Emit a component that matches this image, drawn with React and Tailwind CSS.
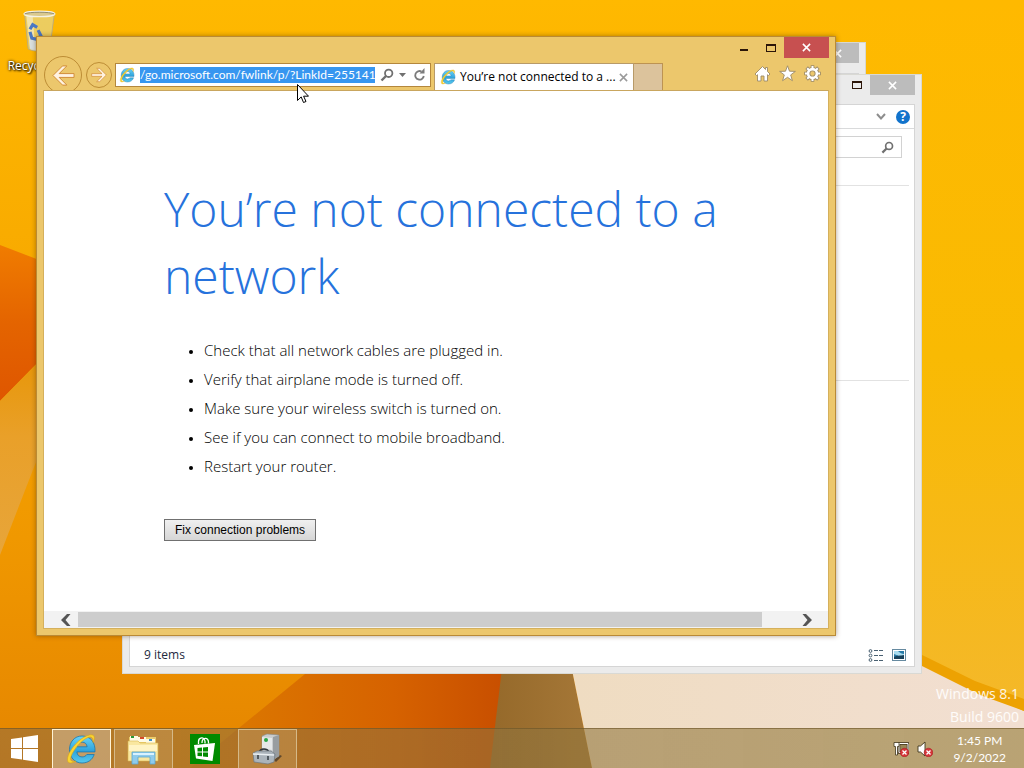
import React, { useId } from "react";

const tips = [
  "Check that all network cables are plugged in.",
  "Verify that airplane mode is turned off.",
  "Make sure your wireless switch is turned on.",
  "See if you can connect to mobile broadband.",
  "Restart your router.",
];

function Wallpaper() {
  return (
    <svg className="absolute inset-0 h-full w-full" viewBox="0 0 1024 768" preserveAspectRatio="none" aria-hidden="true">
      <defs>
        <linearGradient id="wpBase" x1="0" y1="0" x2="0" y2="1">
          <stop offset="0" stopColor="#ffb900" />
          <stop offset="0.35" stopColor="#f8aa00" />
          <stop offset="0.7" stopColor="#f09800" />
          <stop offset="1" stopColor="#e58500" />
        </linearGradient>
        <linearGradient id="wpRed" x1="0" y1="0" x2="0" y2="1">
          <stop offset="0" stopColor="#f07c00" />
          <stop offset="0.5" stopColor="#e46400" />
          <stop offset="1" stopColor="#df5600" />
        </linearGradient>
        <linearGradient id="wpTan" x1="0" y1="0" x2="0" y2="1">
          <stop offset="0" stopColor="#e79400" />
          <stop offset="0.45" stopColor="#e9a029" />
          <stop offset="1" stopColor="#e7a53a" />
        </linearGradient>
        <linearGradient id="wpDeep" x1="0" y1="0" x2="1" y2="0">
          <stop offset="0" stopColor="#dd7d00" />
          <stop offset="0.65" stopColor="#d66200" />
          <stop offset="1" stopColor="#c84f00" />
        </linearGradient>
        <linearGradient id="wpOlive" x1="0" y1="0" x2="1" y2="0">
          <stop offset="0" stopColor="#95692a" />
          <stop offset="1" stopColor="#a67838" />
        </linearGradient>
        <linearGradient id="wpSand" x1="0" y1="0" x2="1" y2="0">
          <stop offset="0" stopColor="#efdcc1" />
          <stop offset="1" stopColor="#f2dfd2" />
        </linearGradient>
        <linearGradient id="wpRight" x1="0" y1="0" x2="0" y2="1">
          <stop offset="0" stopColor="#ffb900" />
          <stop offset="0.5" stopColor="#f9ba03" />
          <stop offset="1" stopColor="#f4b82a" />
        </linearGradient>
      </defs>
      <rect width="1024" height="768" fill="url(#wpBase)" />
      <path d="M0 245 60 268V340L0 401Z" fill="url(#wpRed)" />
      <path d="M0 401 60 340V400L0 555Z" fill="url(#wpTan)" />
      <path d="M190 768 305 674H503L492 768Z" fill="url(#wpDeep)" />
      <path d="M503 660H570L592 768H490Z" fill="url(#wpOlive)" />
      <path d="M570 660H1024V768H592Z" fill="url(#wpSand)" />
      <path d="M820 0H1024V711L922 665H820Z" fill="url(#wpRight)" />
      <path d="M918 653 975 681 1024 699V711L980 695 918 664Z" fill="#eda202" />
    </svg>
  );
}

function IeLogo({ className }) {
  const id = useId();
  return (
    <svg className={className} viewBox="0 0 32 32" aria-hidden="true">
      <defs>
        <linearGradient id={id} x1="0" y1="0" x2="0" y2="1">
          <stop offset="0" stopColor="#69d3f7" />
          <stop offset="0.55" stopColor="#2fa3dc" />
          <stop offset="1" stopColor="#57c9ee" />
        </linearGradient>
      </defs>
      <path
        d="M17 3C9.500 3 4.500 9 4.500 16.500S9.500 30 17 30c6 0 10.500-3.300 12.200-8.500h-7.400c-1 1.600-2.600 2.400-4.700 2.400-3 0-5-1.900-5.200-5H30C30.600 9.500 25.500 3 17 3Zm-5 10.800c.5-2.900 2.400-4.600 5.200-4.600s4.600 1.700 4.900 4.600Z"
        fill={`url(#${id})`}
        stroke="#1b76ad"
        strokeWidth="0.8"
        fillRule="evenodd"
      />
      <path
        d="M28 9.500C30.500 4.500 29.500 1 24.500 2 17.500 3.300 8.500 11.500 4 20.500 1.500 26 2 30.500 6 30c1.800-.2 3.500-1 5-2-3 .9-5.600.5-5.400-2.600C6 20 15 8 22.500 4.700c3.700-1.700 5.900-.6 5.500 4.800Z"
        fill="#fbd531"
        stroke="#d9a514"
        strokeWidth="0.6"
      />
    </svg>
  );
}

function CloseGlyph({ className }) {
  return (
    <svg className={className} viewBox="0 0 10 10" fill="none" stroke="currentColor" strokeWidth="1.700" aria-hidden="true">
      <path d="M1 1 9 9M9 1 1 9" />
    </svg>
  );
}

function MaxGlyph() {
  return <span className="block h-2 w-[10px] border border-t-2 border-[#2b1508]" />;
}

function SearchGlyph({ className }) {
  return (
    <svg className={className} viewBox="0 0 14 14" fill="none" stroke="#707070" aria-hidden="true">
      <circle cx="8.700" cy="5.300" r="3.700" strokeWidth="1.800" />
      <path d="M6 8 1.500 12.500" strokeWidth="2.400" />
    </svg>
  );
}

function RecycleBin() {
  return (
    <a href="#recycle-bin" className="absolute left-0 top-2 flex w-[78px] flex-col items-center gap-1 text-xs leading-4 text-white [text-shadow:1px_1px_2px_#000,0_0_3px_#000]">
      <svg className="h-[46px] w-9" viewBox="0 0 40 46" aria-hidden="true">
        <path d="M4 4 8 43c5 3 19 3 24 0L37 4Z" fill="#e9d070" fillOpacity="0.850" stroke="#b9ab80" />
        <path d="M6 6 10 42c2 1 4 1 6 2L13 7Z" fill="#f7f1da" opacity="0.600" />
        <path d="M9 33h16l-1 11c-5 1-11 1-14-1Z" fill="#d3deec" opacity="0.800" />
        <ellipse cx="20.500" cy="4" rx="17" ry="3" fill="#dac98e" stroke="#f5f2e4" strokeWidth="1.500" />
        <path d="M4 4c5-2.500 28-2.500 33 0" fill="none" stroke="#8b8666" />
        <g fill="none" stroke="#4a78c4" strokeWidth="3.500">
          <path d="m10 21 3-5 5 3" />
          <path d="m10 24 2 7 5 1" />
          <path d="m19 22 3 6-4 4" />
        </g>
      </svg>
      Recycle Bin
    </a>
  );
}

function BackWindow() {
  return (
    <section aria-label="Background window" className="absolute left-[400px] top-[42px] flex h-[200px] w-[466px] flex-col border border-[#d8d8d0] bg-[#ebebeb] pr-[6px]">
      <div className="flex justify-end">
        <button aria-label="Close background window" className="flex h-5 w-[44px] items-center justify-center bg-[#bcbcbc] text-white">
          <CloseGlyph className="h-[9px] w-[9px]" />
        </button>
      </div>
      <div className="mt-[10px] flex-1 border border-[#d5d5d5] bg-white" />
    </section>
  );
}

function ExplorerWindow() {
  return (
    <section aria-label="This PC" className="absolute left-[122px] top-[74px] flex h-[600px] w-[800px] flex-col border border-[#d9d9d4] bg-[#ebebeb] px-[6px] pb-[6px]">
      <div className="flex h-[29px] items-start justify-end">
        <button aria-label="Maximize This PC" className="flex h-5 w-[27px] items-center justify-center">
          <MaxGlyph />
        </button>
        <button aria-label="Close This PC" className="flex h-5 w-[45px] items-center justify-center bg-[#bcbcbc] text-white">
          <CloseGlyph className="h-[9px] w-[9px]" />
        </button>
      </div>
      <div className="flex flex-1 flex-col border border-[#d5d5d5] bg-white">
        <div className="flex h-6 items-center justify-end gap-[10px] border-b border-[#d9dadb] pr-1">
          <button aria-label="Expand ribbon">
            <svg className="h-2 w-[10px]" viewBox="0 0 10 8" fill="none" stroke="#8d8d8d" strokeWidth="2" aria-hidden="true">
              <path d="m1 1 4 4.500L9 1" />
            </svg>
          </button>
          <button aria-label="Help" className="flex h-[14px] w-[14px] items-center justify-center rounded-full bg-[#1173cc] text-xs font-bold leading-none text-white">
            ?
          </button>
        </div>
        <div className="mt-[7px] flex h-[22px] w-[300px] items-center self-end border border-[#d2d2d2] mr-[12px] pr-[7px]">
          <input aria-label="Search This PC" className="min-w-0 flex-1 bg-transparent outline-none" />
          <SearchGlyph className="h-[13px] w-[13px]" />
        </div>
        <div className="mx-[5px] mt-[27px] h-[196px] border-y border-[#e2e2e2]" />
        <footer className="mt-auto flex h-[22px] items-center justify-between pl-[14px] pr-2 text-xs text-[#1e2a3e]">
          <span>9 items</span>
          <span className="flex items-center gap-2">
            <button aria-label="Details view">
              <svg className="h-[13px] w-4" viewBox="0 0 16 13" fill="none" stroke="#4a6172" aria-hidden="true">
                <circle cx="2.500" cy="2" r="1.400" />
                <circle cx="2.500" cy="6.500" r="1.400" />
                <circle cx="2.500" cy="11" r="1.400" />
                <path d="M6 1.500h4m1 0h4M6 6.500h4m1 0h4M6 11.500h4m1 0h4" />
              </svg>
            </button>
            <button aria-label="Large icons view">
              <svg className="h-[12px] w-[14px]" viewBox="0 0 14 12" aria-hidden="true">
                <rect x="0.500" y="0.500" width="13" height="11" fill="#fff" stroke="#668aa0" />
                <rect x="2" y="2" width="10" height="8" fill="#277aa8" />
                <path d="M2 2h4c2 2 4 3 6 3v2H7L2 5Z" fill="#a9dcef" />
                <path d="M2 8c3-2 6-1 10-2v4H2Z" fill="#17405a" />
              </svg>
            </button>
          </span>
        </footer>
      </div>
    </section>
  );
}

function NavArrow({ flip, className }) {
  return (
    <svg className={className} viewBox="0 0 24 24" aria-hidden="true">
      <path
        transform={flip ? "rotate(180 12 12)" : undefined}
        d="M1 12 11 2h4.500l-8 8H23v4H7.500l8 8H11Z"
        fill="#fff2e0"
        stroke="#d08a35"
        strokeWidth="1"
      />
    </svg>
  );
}

function BrowserWindow() {
  return (
    <section aria-label="Internet Explorer" className="absolute left-[36px] top-[36px] flex h-[600px] w-[800px] flex-col border border-[#b98a36] bg-[#ecc76c] px-[6px] pb-[6px] shadow-[0_0_5px_rgba(70,40,0,0.45)]">
      <header className="flex h-[53px] shrink-0 items-end justify-between overflow-hidden pl-px">
        <div className="flex items-end">
          <button aria-label="Back" className="-mb-1 mr-1 flex h-[38px] w-[38px] items-center justify-center rounded-full border border-[#bd8d35]">
            <NavArrow className="h-[23px] w-[23px]" />
          </button>
          <button aria-label="Forward" className="mb-[2px] flex h-[26px] w-[26px] items-center justify-center rounded-full border border-[#bd8d35]">
            <NavArrow flip className="h-4 w-4" />
          </button>
          <div className="mb-[3px] ml-[3px] flex h-6 w-[316px] items-center border border-[#b4873c] bg-white pl-[3px] pr-1">
            <IeLogo className="h-4 w-4 shrink-0" />
            <input
              aria-label="Address"
              readOnly
              value="/go.microsoft.com/fwlink/p/?LinkId=255141"
              className="ml-[5px] h-4 min-w-0 flex-1 bg-[#3796f0] font-['Lato',sans-serif] text-xs text-white outline-none"
            />
            <button aria-label="Search" className="ml-[5px]">
              <SearchGlyph className="h-[14px] w-[14px]" />
            </button>
            <button aria-label="Show address list" className="ml-[5px]">
              <svg className="h-1 w-[7px]" viewBox="0 0 7 4" fill="#707070" aria-hidden="true">
                <path d="M0 0h7L3.500 4Z" />
              </svg>
            </button>
            <button aria-label="Refresh" className="ml-[7px]">
              <svg className="h-[14px] w-[13px]" viewBox="0 0 13 14" aria-hidden="true">
                <path d="M8.500 3.500A4.300 4.300 0 1 0 10.800 8" fill="none" stroke="#7b7b7b" strokeWidth="1.800" />
                <path d="M6.500 5.500h5V0Z" fill="#7b7b7b" />
              </svg>
            </button>
          </div>
          <div className="ml-[3px] flex h-[27px] items-stretch">
            <div className="flex w-[200px] items-center border border-b-0 border-[#b89a68] bg-white pl-[5px] pr-[5px]">
              <IeLogo className="h-4 w-4 shrink-0" />
              <span className="ml-1 flex-1 whitespace-nowrap text-xs text-black">You’re not connected to a ...</span>
              <button aria-label="Close tab" className="text-[#9a9a9a]">
                <CloseGlyph className="h-[9px] w-[9px]" />
              </button>
            </div>
            <button aria-label="New tab" className="w-[29px] border border-b-0 border-l-0 border-[#bd9352] bg-[#dcc39c]" />
          </div>
        </div>
        <div className="flex h-full flex-col items-end justify-between">
          <div className="flex text-white">
            <button aria-label="Minimize" className="flex h-[21px] w-[27px] items-center justify-center pt-[5px]">
              <span className="h-[2px] w-2 bg-[#2b1508]" />
            </button>
            <button aria-label="Maximize" className="flex h-[21px] w-[27px] items-center justify-center">
              <MaxGlyph />
            </button>
            <button aria-label="Close" className="flex h-[21px] w-[45px] items-center justify-center bg-[#c75050]">
              <CloseGlyph className="h-[9px] w-[9px]" />
            </button>
          </div>
          <div className="mb-2 mr-2 flex items-center gap-2">
            <button aria-label="Home">
              <svg className="h-[17px] w-[17px]" viewBox="0 0 17 17" fill="#fff" stroke="#9c8a68" strokeWidth="0.900" aria-hidden="true">
                <path d="M8.500 1.500 1 9l1.500 1.500L3.500 9.700V16H7v-5h3v5h3.500V9.700l1 .8L16 9l-2.500-2.500V2.500h-2v2Z" />
              </svg>
            </button>
            <button aria-label="Favorites">
              <svg className="h-[17px] w-[17px]" viewBox="0 0 17 17" fill="#fff" stroke="#9c8a68" strokeWidth="0.900" aria-hidden="true">
                <path d="m8.500.8 2 5.400 5.900.2-4.700 3.500 1.700 5.800-4.900-3.400-4.900 3.400 1.700-5.800L.6 6.400l5.900-.2Z" />
              </svg>
            </button>
            <button aria-label="Tools">
              <svg className="h-[17px] w-[17px]" viewBox="-8.500 -8.500 17 17" aria-hidden="true">
                {["#9c8a68", "#ffffff"].map((color, layer) => (
                  <g key={color} stroke={color} fill="none">
                    <circle r="4.400" strokeWidth={layer ? 2.600 : 4.400} />
                    {[0, 45, 90, 135].map((a) => (
                      <g key={a} transform={`rotate(${a})`} strokeWidth={layer ? 2 : 3.600}>
                        <path d={layer ? "M0-7.500V-5M0 5v2.500" : "M0-8.300V-5M0 5v3.300"} />
                      </g>
                    ))}
                  </g>
                ))}
              </svg>
            </button>
          </div>
        </div>
      </header>
      <main className="flex min-h-0 flex-1 flex-col border border-[#d5b05c] border-t-[#c9a65e] bg-white">
        <div className="flex-1 pl-[120px] pr-[80px] pt-[84px]">
          <h1 className="text-[48px] font-light leading-[67px] text-[#2672dc]">You’re not connected to a network</h1>
          <ul className="mt-[27px] list-disc pl-10 text-[15px] font-light leading-[29px] text-black marker:text-xs">
            {tips.map((tip) => (
              <li key={tip}>{tip}</li>
            ))}
          </ul>
          <button className="mt-[38px] h-[22px] border border-[#707070] bg-linear-to-b from-[#f0f0f0] to-[#d6d6d6] px-[10px] font-['Liberation_Sans',sans-serif] text-xs text-black">
            Fix connection problems
          </button>
        </div>
        <div className="flex h-[17px] items-center bg-[#f2f2f2] text-[#555555]">
          <button aria-label="Scroll left" className="flex w-[34px] justify-center pl-[9px]">
            <svg className="h-3 w-[10px]" viewBox="0 0 10 12" fill="currentColor" aria-hidden="true">
              <path d="M0 6 6 0h3.500l-5 6 5 6H6Z" />
            </svg>
          </button>
          <div className="h-[15px] flex-1 bg-[#cdcdcd]" />
          <button aria-label="Scroll right" className="flex w-[66px] justify-center pl-[24px]">
            <svg className="h-3 w-[10px]" viewBox="0 0 10 12" fill="currentColor" aria-hidden="true">
              <path d="M10 6 4 0H.5l5 6-5 6H4Z" />
            </svg>
          </button>
        </div>
      </main>
    </section>
  );
}

function FolderIcon() {
  return (
    <svg className="h-8 w-8" viewBox="0 0 32 32" aria-hidden="true">
      <path d="M2 4h27v24H2Z" fill="#eccd6c" />
      <path d="M3 3h8v5H3ZM11 4h8v5h-8ZM19 6h9v4h-9Z" fill="#fffbe5" />
      <path d="M4 3h3v2H4Z" fill="#2a9a35" />
      <path d="M13 4h4v2h-4Z" fill="#d64a2b" />
      <path d="M22 6h3v2h-3Z" fill="#3d8fc9" />
      <path d="M1 8h10l2 2h18v18H1Z" fill="#f9e7a0" stroke="#d7b54d" strokeWidth="0.600" />
      <path d="M2 12h28v6H2Z" fill="#fff4c5" />
      <path d="M5 19h23v12h-5v-7H11v7H5Z" fill="#8fcbec" stroke="#5ba7cf" strokeWidth="0.800" />
      <path d="M6 20h21v2H6Z" fill="#d9f2ff" />
    </svg>
  );
}

function StoreIcon() {
  return (
    <svg className="h-[30px] w-[30px]" viewBox="0 0 30 30" aria-hidden="true">
      <path d="M0 0h30v30H0Z" fill="#008a00" />
      <path d="M8.500 10V7.500c0-4 6-5.500 6.500 0v2M12 9c0-5.500 6.500-6.500 6.500-.5v1" fill="none" stroke="#fff" strokeWidth="1.300" />
      <path d="m4 11 21-2-2.500 18L6 24.500Z" fill="#fff" />
      <path d="m7.500 14 4.500-.5V17.500H7.500Zm5.500-.6 5-.5v4.600h-5ZM7.500 18.500H12v3.800l-4.500-.4ZM13 18.500h5v4.400l-5-.5Z" fill="#008a00" />
    </svg>
  );
}

function ServerIcon() {
  return (
    <svg className="h-8 w-8" viewBox="0 0 32 32" aria-hidden="true">
      <path d="m23 27 6-5 2 1-6 6Z" fill="#3a3026" opacity="0.700" />
      <path d="m11 3 5-2 12 1v21l-5 3-12-3Z" fill="#c9ccce" stroke="#85898c" strokeWidth="0.600" />
      <path d="m22 4 6-2v21l-6 4Z" fill="#989da0" />
      <path d="m11 4 10 1v12l-10-2Z" fill="#e5e8e9" />
      <circle cx="15" cy="7" r="2" fill="#28a544" />
      <path d="M8 19c2-4 8-4 10 0" fill="none" stroke="#30383e" strokeWidth="1.500" />
      <path d="m2 20 4-2h14l4 3-1 8-6 2L3 29Z" fill="#abb4bb" stroke="#6d777e" strokeWidth="0.700" />
      <path d="m2 21 21 1" stroke="#e9eff2" strokeWidth="1.500" />
      <path d="M7 22v4m10-3v4" stroke="#525b61" strokeWidth="2" />
    </svg>
  );
}

function TrayBadge() {
  return (
    <g>
      <circle cx="11.500" cy="11.500" r="4.300" fill="#d6353a" stroke="#a71920" strokeWidth="0.600" />
      <path d="m9.500 9.500 4 4m0-4-4 4" stroke="#fff" strokeWidth="1.300" />
    </g>
  );
}

const taskFrame = "flex h-10 w-[59px] items-center justify-center border pr-px";

function Taskbar() {
  return (
    <nav aria-label="Taskbar" className="relative flex h-10 items-stretch justify-between border-t border-[#6b5326]/60 bg-linear-to-r from-[#8b6b45]/55 to-[#937b35]/60">
      <div className="flex items-start">
        <button aria-label="Start" className="flex h-full w-[52px] items-center justify-center pr-[3px]">
          <svg className="h-[27px] w-[27px]" viewBox="0 0 27 27" fill="#fff" aria-hidden="true">
            <path d="m0 4 11-1.500V13H0ZM12 2.300 27 0v13H12ZM0 14h11v10.500L0 23Zm12 0h15v13l-15-2.300Z" />
          </svg>
        </button>
        <div className="flex gap-[3px]">
          <button aria-label="Internet Explorer" className={`${taskFrame} border-[#fff3d5] bg-[#ceb592]/60`}>
            <IeLogo className="h-8 w-8" />
          </button>
          <button aria-label="File Explorer" className={`${taskFrame} border-[#d5b988] bg-[#cba76d]/35`}>
            <FolderIcon />
          </button>
          <button aria-label="Store" className={`${taskFrame} border-transparent`}>
            <StoreIcon />
          </button>
          <button aria-label="Server tools" className={`${taskFrame} border-[#d5b988] bg-[#cba76d]/35`}>
            <ServerIcon />
          </button>
        </div>
      </div>
      <div className="flex items-center pr-[18px] text-white">
        <button aria-label="Network: not connected" className="mr-2">
          <svg className="h-4 w-4" viewBox="0 0 16 16" aria-hidden="true">
            <path d="M6 2.500h9v9H6Z" fill="#988555" stroke="#40351c" strokeWidth="2.500" />
            <path d="M6 2.500h9v9H6Z" fill="none" stroke="#fff" />
            <path d="M1 1.500h5v4H4.500V14h-2V5.500H1Z" fill="#fff" stroke="#40351c" strokeWidth="0.800" />
            <TrayBadge />
          </svg>
        </button>
        <button aria-label="Volume: no device" className="mr-5">
          <svg className="h-4 w-4" viewBox="0 0 16 16" aria-hidden="true">
            <path d="M1 5h2.500L8 1v14l-4.500-4H1Z" fill="#fff" stroke="#40351c" strokeWidth="0.900" />
            <TrayBadge />
          </svg>
        </button>
        <time dateTime="2022-09-02T13:45" className="flex flex-col items-center font-['Lato',sans-serif] text-xs leading-[17px]">
          <span>1:45 PM</span>
          <span>9/2/2022</span>
        </time>
      </div>
    </nav>
  );
}

export default function App() {
  return (
    <div className="relative flex min-h-screen flex-col justify-end overflow-hidden bg-[#f5a800] font-['Open_Sans','Noto_Sans',sans-serif]">
      <Wallpaper />
      <RecycleBin />
      <BackWindow />
      <ExplorerWindow />
      <BrowserWindow />
      <p className="relative pr-[5px] text-right text-[14px] leading-[23px] text-white/90">
        Windows 8.1
        <br />
        Build 9600
      </p>
      <Taskbar />
      <svg className="pointer-events-none absolute left-[297px] top-[84px] h-5 w-3" viewBox="0 0 12 20" aria-hidden="true">
        <path d="M.5.500v16l3.700-3.600L6.500 18.500l2.500-1-2.400-5.300H11.500Z" fill="#fff" stroke="#000" />
      </svg>
    </div>
  );
}
